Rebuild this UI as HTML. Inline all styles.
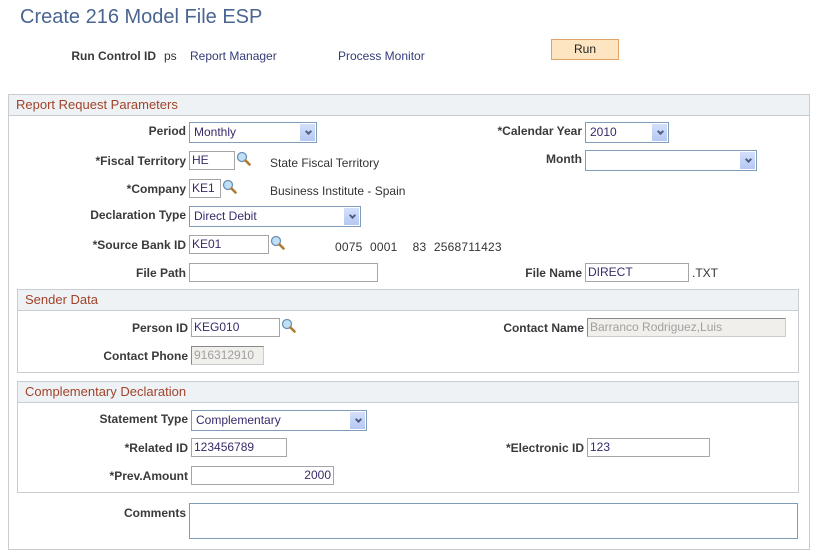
<!DOCTYPE html>
<html><head><meta charset="utf-8"><style>
*{margin:0;padding:0;box-sizing:border-box}
body{width:821px;height:558px;background:#fff;font-family:"Liberation Sans",Arial,sans-serif;font-size:12px;color:#333;position:relative;overflow:hidden}
.a{position:absolute;white-space:nowrap}
.lbl{position:absolute;font-weight:bold;color:#3a3a3a;text-align:right;white-space:nowrap;line-height:14px}
.in{position:absolute;border:1px solid #a6a6a6;background:#fff;height:19px;line-height:17px;padding-left:2px;color:#3a2a6a;font-size:12px;white-space:nowrap;overflow:hidden}
.sel{position:absolute;border:1px solid #7f9db9;background:#fff;height:21px;line-height:19px;padding-left:4px;color:#3a2a6a;white-space:nowrap}
.sel:after{content:"";position:absolute;right:1px;top:1px;width:15px;height:17px;background:linear-gradient(#d4e0fb,#b5c8f3)}
.sel i{position:absolute;right:5px;top:6px;width:5px;height:5px;border-right:2px solid #4d6185;border-bottom:2px solid #4d6185;transform:rotate(45deg);z-index:2}
.dis{position:absolute;background:#f0efeb;border:1px solid #ccc;border-top-color:#888;border-left-color:#888;color:#a0a0a0;height:19px;line-height:17px;padding-left:2px;white-space:nowrap}
.box{position:absolute;border:1px solid #c9ccd1}
.hd{position:absolute;left:0;right:0;top:0;height:21px;background:#eff2f5;border-bottom:1px solid #c9ccd1;color:#a0432a;font-size:13px;line-height:20px;padding-left:7px}
.lens{position:absolute;width:15px;height:15px}
.t{position:absolute;color:#333;white-space:nowrap}
</style></head><body>
<div class="a" style="left:20px;top:6px;font-size:20px;color:#4a6591">Create 216 Model File ESP</div>
<div class="lbl" style="right:665px;top:49px">Run Control ID</div>
<div class="t" style="left:164px;top:49px">ps</div>
<div class="t" style="left:190px;top:49px;color:#333c7a">Report Manager</div>
<div class="t" style="left:338px;top:49px;color:#333c7a">Process Monitor</div>
<div class="a" style="left:551px;top:39px;width:68px;height:21px;border:1px solid #e0a566;background:#fce5c0;text-align:center;line-height:19px;color:#222">Run</div>

<div class="box" style="left:8px;top:94px;width:802px;height:456px"><div class="hd">Report Request Parameters</div></div>

<svg width="0" height="0" style="position:absolute"><defs><symbol id="L" viewBox="0 0 15 15"><circle cx="6" cy="6" r="4.5" fill="#bfe0f5" stroke="#6a90b5" stroke-width="1.3"/><path d="M9.5 9.5 L13.5 13.5" stroke="#b07a30" stroke-width="2.6" stroke-linecap="round"/></symbol></defs></svg>

<div class="lbl" style="right:635px;top:124px">Period</div>
<div class="sel" style="left:189px;top:122px;width:128px">Monthly<i></i></div>
<div class="lbl" style="right:635px;top:154px">*Fiscal Territory</div>
<div class="in" style="left:189px;top:151px;width:46px">HE</div>
<svg class="lens" style="left:236px;top:151px"><use href="#L"/></svg>
<div class="t" style="left:270px;top:156px">State Fiscal Territory</div>
<div class="lbl" style="right:635px;top:182px">*Company</div>
<div class="in" style="left:189px;top:179px;width:32px">KE1</div>
<svg class="lens" style="left:222px;top:179px"><use href="#L"/></svg>
<div class="t" style="left:270px;top:184px">Business Institute - Spain</div>
<div class="lbl" style="right:635px;top:208px">Declaration Type</div>
<div class="sel" style="left:189px;top:206px;width:172px">Direct Debit<i></i></div>
<div class="lbl" style="right:635px;top:238px">*Source Bank ID</div>
<div class="in" style="left:189px;top:235px;width:80px">KE01</div>
<svg class="lens" style="left:270px;top:235px"><use href="#L"/></svg>
<div class="t" style="left:335px;top:240px;word-spacing:4px;letter-spacing:0.2px">0075 0001 &nbsp;83 2568711423</div>
<div class="lbl" style="right:635px;top:266px">File Path</div>
<div class="in" style="left:189px;top:263px;width:189px"></div>

<div class="lbl" style="right:239px;top:124px">*Calendar Year</div>
<div class="sel" style="left:585px;top:122px;width:84px">2010<i></i></div>
<div class="lbl" style="right:239px;top:152px">Month</div>
<div class="sel" style="left:585px;top:150px;width:172px"><i></i></div>
<div class="lbl" style="right:239px;top:266px">File Name</div>
<div class="in" style="left:585px;top:263px;width:104px">DIRECT</div>
<div class="t" style="left:692px;top:266px">.TXT</div>

<div class="box" style="left:17px;top:289px;width:782px;height:84px"><div class="hd">Sender Data</div></div>
<div class="lbl" style="right:633px;top:321px">Person ID</div>
<div class="in" style="left:191px;top:318px;width:89px">KEG010</div>
<svg class="lens" style="left:281px;top:318px"><use href="#L"/></svg>
<div class="lbl" style="right:237px;top:321px">Contact Name</div>
<div class="dis" style="left:587px;top:318px;width:199px">Barranco Rodriguez,Luis</div>
<div class="lbl" style="right:633px;top:349px">Contact Phone</div>
<div class="dis" style="left:191px;top:346px;width:73px">916312910</div>

<div class="box" style="left:17px;top:381px;width:782px;height:112px"><div class="hd">Complementary Declaration</div></div>
<div class="lbl" style="right:633px;top:412px">Statement Type</div>
<div class="sel" style="left:191px;top:410px;width:176px">Complementary<i></i></div>
<div class="lbl" style="right:633px;top:441px">*Related ID</div>
<div class="in" style="left:191px;top:438px;width:96px">123456789</div>
<div class="lbl" style="right:237px;top:441px">*Electronic ID</div>
<div class="in" style="left:587px;top:438px;width:123px">123</div>
<div class="lbl" style="right:633px;top:469px">*Prev.Amount</div>
<div class="in" style="left:191px;top:466px;width:143px;text-align:right;padding-right:2px">2000</div>

<div class="lbl" style="right:635px;top:506px">Comments</div>
<div class="a" style="left:189px;top:503px;width:609px;height:36px;border:1px solid #7f9db9"></div>
</body></html>
